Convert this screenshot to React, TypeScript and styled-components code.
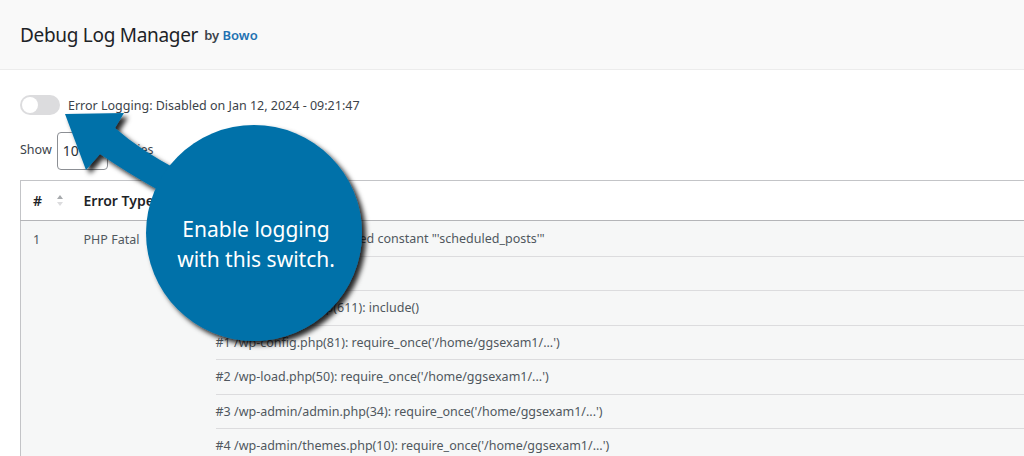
import React from 'react';
import styled, { createGlobalStyle } from 'styled-components';

const GlobalStyle = createGlobalStyle`
  html, body {
    margin: 0;
    padding: 0;
    background: #fff;
  }
  body {
    font-family: 'Noto Sans', 'Open Sans', sans-serif;
    color: #3c434a;
    overflow: hidden;
  }
`;

const Page = styled.div`
  position: relative;
  width: 1024px;
  height: 456px;
  overflow: hidden;
  background: #fff;
`;

const Header = styled.header`
  height: 69px;
  padding-left: 20px;
  display: flex;
  align-items: center;
  background: #f9f9f9;
  border-bottom: 1px solid #ececec;
`;

const Title = styled.h1`
  margin: 0;
  font-size: 19px;
  font-weight: 400;
  color: #1d2327;
  letter-spacing: -0.3px;
`;

const Byline = styled.span`
  margin-left: 6px;
  font-size: 13px;
  font-weight: 600;
  color: #3c434a;
`;

const Author = styled.a`
  color: #2271b1;
  text-decoration: none;
`;

const Content = styled.main`
  padding: 0 20px;
`;

const StatusRow = styled.div`
  margin-top: 25px;
  display: flex;
  align-items: center;
  gap: 8px;
  font-size: 12.5px;
`;

const Switch = styled.span<{ $on?: boolean }>`
  position: relative;
  width: 40px;
  height: 20px;
  border-radius: 10px;
  background: ${(p) => (p.$on ? '#2271b1' : '#dcdcde')};

  &::after {
    content: '';
    position: absolute;
    top: 2px;
    left: ${(p) => (p.$on ? '22px' : '2px')};
    width: 16px;
    height: 16px;
    border-radius: 50%;
    background: #fff;
  }
`;

const LengthRow = styled.div`
  margin-top: 17px;
  display: flex;
  align-items: center;
  gap: 5px;
  font-size: 12.5px;
  line-height: 16px;
`;

const ShowLabel = styled.span`
  margin-top: -3px;
`;

const SelectBox = styled.span`
  box-sizing: border-box;
  width: 51px;
  height: 38px;
  padding-left: 5px;
  display: flex;
  align-items: center;
  border: 1px solid #8c8f94;
  border-radius: 4px;
  font-size: 14px;
  color: #2c3338;
`;

const Table = styled.table`
  margin-top: 10px;
  width: 1200px;
  border-collapse: collapse;
  border: 1px solid #c3c4c7;
  font-size: 12.5px;
  color: #50575e;
`;

const HeadCell = styled.th<{ $width?: number }>`
  box-sizing: border-box;
  width: ${(p) => (p.$width ? `${p.$width}px` : 'auto')};
  height: 40px;
  padding: 0 12px;
  text-align: left;
  font-size: 14px;
  font-weight: 600;
  color: #1d2327;
  background: #fff;
  border-bottom: 1px solid #b4b5b8;
`;

const SortCell = styled.div`
  display: flex;
  justify-content: space-between;
  align-items: center;
  margin-right: -3px;
`;

const Row = styled.tr`
  background: #f6f7f7;
`;

const Cell = styled.td`
  vertical-align: top;
  padding: 10px 12px 0;
  line-height: 18.5px;
`;

const TraceCell = styled.td`
  vertical-align: top;
  padding: 0 0 0 12px;
`;

const TraceList = styled.ul`
  margin: 0;
  padding: 0;
  list-style: none;
`;

const TraceItem = styled.li`
  padding: 9px 0 7px;
  line-height: 18.5px;
  border-bottom: 1px solid #dcdcde;
  white-space: nowrap;

  & + & {
    padding-top: 8px;
  }
`;

const Callout = styled.svg`
  position: absolute;
  top: 0;
  left: 0;
  pointer-events: none;
`;

const CalloutLabel = styled.div`
  position: absolute;
  left: 146px;
  top: 214px;
  width: 220px;
  text-align: center;
  font-family: 'Noto Sans', sans-serif;
  font-size: 21px;
  line-height: 30px;
  color: #fff;
  pointer-events: none;
`;

const SortArrows = () => (
  <svg width="6" height="11" viewBox="0 0 6 11">
    <path d="M3 0 L6 4 L0 4 Z" fill="#a7aaad" />
    <path d="M0 7 L6 7 L3 11 Z" fill="#dcdcde" />
  </svg>
);

const trace = [
  'Uncaught Error: Undefined constant "\'scheduled_posts\'"',
  'Stack trace:',
  '#0 /wp-settings.php(611): include()',
  "#1 /wp-config.php(81): require_once('/home/ggsexam1/...')",
  "#2 /wp-load.php(50): require_once('/home/ggsexam1/...')",
  "#3 /wp-admin/admin.php(34): require_once('/home/ggsexam1/...')",
  "#4 /wp-admin/themes.php(10): require_once('/home/ggsexam1/...')",
];

const App = () => {
  return (
    <>
      <GlobalStyle />
      <Page>
        <Header>
          <Title>Debug Log Manager</Title>
          <Byline>
            by <Author href="#">Bowo</Author>
          </Byline>
        </Header>

        <Content>
          <StatusRow>
            <Switch />
            <span>Error Logging: Disabled on Jan 12, 2024 - 09:21:47</span>
          </StatusRow>

          <LengthRow>
            <ShowLabel>Show</ShowLabel>
            <SelectBox>10</SelectBox>
            <ShowLabel>entries</ShowLabel>
          </LengthRow>

          <Table>
            <thead>
              <tr>
                <HeadCell $width={51}>
                  <SortCell>
                    <span>#</span>
                    <SortArrows />
                  </SortCell>
                </HeadCell>
                <HeadCell $width={132}>Error Type</HeadCell>
                <HeadCell>Details</HeadCell>
              </tr>
            </thead>
            <tbody>
              <Row>
                <Cell>1</Cell>
                <Cell>PHP Fatal</Cell>
                <TraceCell>
                  <TraceList>
                    {trace.map((line) => (
                      <TraceItem key={line}>{line}</TraceItem>
                    ))}
                  </TraceList>
                </TraceCell>
              </Row>
            </tbody>
          </Table>
        </Content>

        <Callout width="1024" height="456" viewBox="0 0 1024 456">
          <defs>
            <filter id="callout-shadow" x="-20%" y="-20%" width="140%" height="140%">
              <feDropShadow dx="4" dy="4" stdDeviation="2.5" floodColor="#000" floodOpacity="0.85" />
            </filter>
          </defs>
          <g fill="#0071a9" filter="url(#callout-shadow)">
            <path d="M65 114 L124 113 L115 128 Q140 150 178 170 L188 202 L160 191 Q126 172 100 154 L86 170 Z" />
            <circle cx="254" cy="233" r="108" />
          </g>
        </Callout>
        <CalloutLabel>
          Enable logging
          <br />
          with this switch.
        </CalloutLabel>
      </Page>
    </>
  );
};

export default App;
